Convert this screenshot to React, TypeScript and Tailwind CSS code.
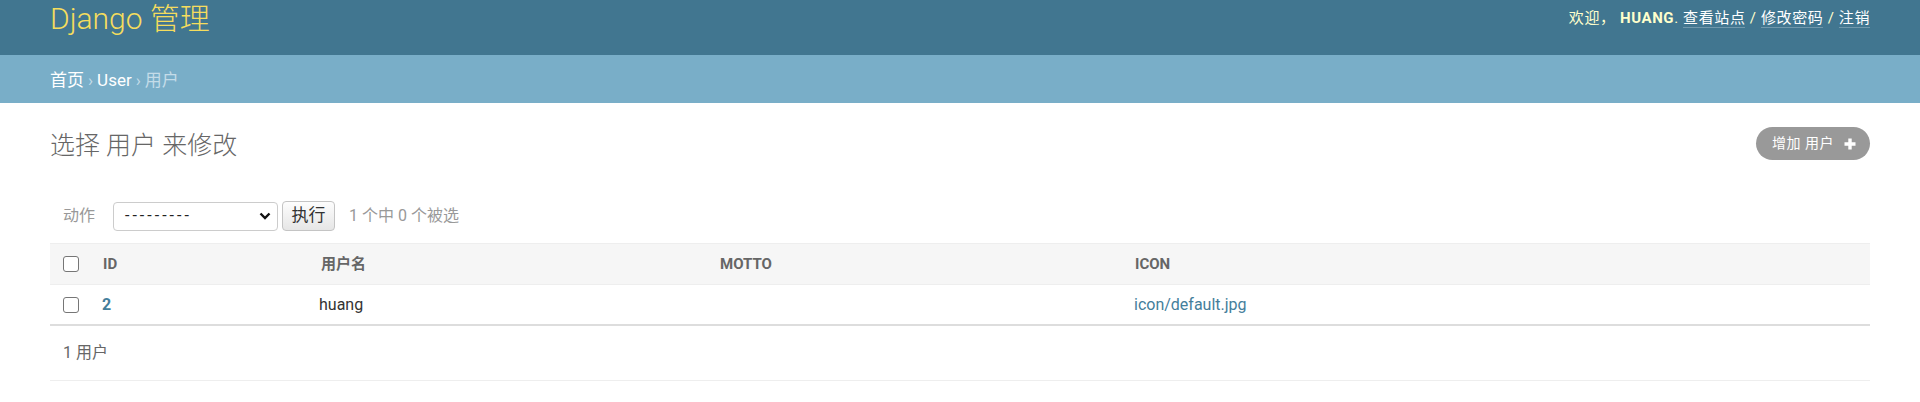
import React from 'react';

const FONT = { fontFamily: 'Roboto, "Noto Sans CJK SC", sans-serif' };

const Checkbox = () => (
  <span className="inline-block w-[16px] h-[16px] rounded-[3px] border-[1.5px] border-[#767676] bg-white" />
);

const PlusIcon = () => (
  <svg width="12" height="12" viewBox="0 0 12 12" className="ml-[10px]">
    <path d="M6 0.5V11.5M0.5 6H11.5" stroke="#fff" strokeWidth="3.4" />
  </svg>
);

const Chevron = () => (
  <svg width="12" height="8" viewBox="0 0 12 8">
    <path d="M1.5 1.5L6 6L10.5 1.5" stroke="#111" strokeWidth="2.4" fill="none" />
  </svg>
);

const cols = 'grid grid-cols-[40px_218px_399px_415px_1fr]';

export default function App() {
  return (
    <div className="min-h-[402px] bg-white text-[#333]" style={FONT}>
      {/* Header */}
      <div className="h-[55px] bg-[#417690] px-[50px] flex justify-between items-start">
        <h1 className="text-[30px] leading-[37px] font-light text-[#f5dd5d]">Django 管理</h1>
        <div className="text-[15px] leading-[37px] tracking-[0.6px] text-[#ffc]">
          欢迎， <strong className="font-bold">HUANG</strong>.{' '}
          <a className="text-white border-b border-white/25">查看站点</a> /{' '}
          <a className="text-white border-b border-white/25">修改密码</a> /{' '}
          <a className="text-white border-b border-white/25">注销</a>
        </div>
      </div>

      {/* Breadcrumbs */}
      <div className="h-[48px] bg-[#79aec8] px-[50px] pt-[3px] flex items-center text-[17px] text-[#c4dce8]">
        <a className="text-white">首页</a>
        <span className="mx-[4px]">›</span>
        <a className="text-white">User</a>
        <span className="mx-[4px]">›</span>
        <span>用户</span>
      </div>

      <div className="px-[50px] pt-[25px]">
        {/* Title row */}
        <div className="h-[36px] flex justify-between items-start">
          <h1 className="text-[25px] leading-[36px] font-light text-[#666]">选择 用户 来修改</h1>
          <a className="mt-[-1px] h-[33px] w-[114px] rounded-full bg-[#999] text-white text-[14px] tracking-[0.5px] flex items-center pl-[16px]">
            增加 用户
            <PlusIcon />
          </a>
        </div>

        {/* Actions */}
        <div className="mt-[37px] h-[30px] flex items-center text-[16px]">
          <label className="ml-[13px] text-[#999]">动作</label>
          <div className="ml-[18px] h-[29px] w-[165px] rounded-[4px] border border-[#ccc] bg-white flex items-center justify-between pl-[11px] pr-[6px] text-[#222]">
            <span className="tracking-[3px]">---------</span>
            <Chevron />
          </div>
          <button className="ml-[4px] h-[30px] w-[53px] rounded-[4px] border border-[#c4c4c4] bg-gradient-to-b from-[#fdfdfd] to-[#e6e6e6] text-[17px] text-[#333]">
            执行
          </button>
          <span className="ml-[14px] text-[#999]">1 个中 0 个被选</span>
        </div>

        {/* Table */}
        <div className="mt-[12px]">
          <div className={`${cols} h-[41px] items-center bg-[#f6f6f6] border-t border-[#eee] text-[15px] font-bold text-[#666] uppercase`}>
            <div className="pl-[13px] flex"><Checkbox /></div>
            <div className="pl-[13px]">ID</div>
            <div className="pl-[13px]">用户名</div>
            <div className="pl-[13px]">MOTTO</div>
            <div className="pl-[13px]">ICON</div>
          </div>
          <div className={`${cols} h-[42px] items-center border-t border-[#eee] border-b-2 border-b-[#ddd] text-[16px]`}>
            <div className="pl-[13px] flex"><Checkbox /></div>
            <div className="pl-[12px] font-bold text-[#447e9b]">2</div>
            <div className="pl-[11px]">huang</div>
            <div className="pl-[13px]" />
            <div className="pl-[12px] text-[#447e9b]">icon/default.jpg</div>
          </div>
          <div className="h-[55px] flex items-center border-b border-[#eee] pl-[13px] text-[16px] text-[#666]">
            1 用户
          </div>
        </div>
      </div>
    </div>
  );
}
